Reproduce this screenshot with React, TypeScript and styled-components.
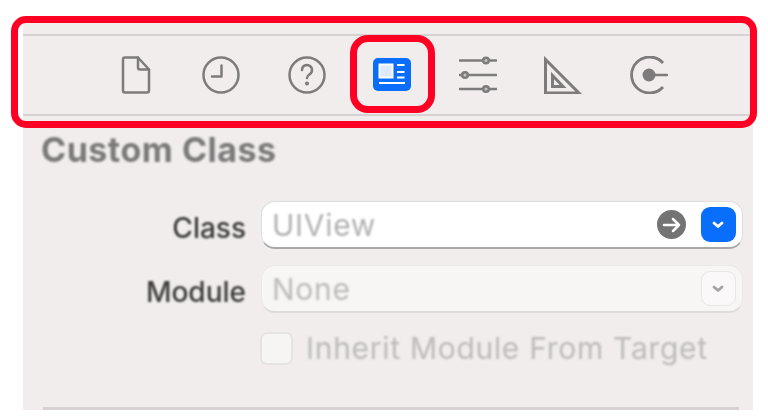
import * as React from "react";
import styled, { createGlobalStyle } from "styled-components";

const GRAY = "#7d7b7b";
const BLUE = "#0a6efd";
const RED = "#ff0024";
const PANEL = "#f1eded";

const GlobalStyle = createGlobalStyle`
  html, body {
    margin: 0;
    background: #fff;
    font-family: Inter, "Liberation Sans", sans-serif;
  }
`;

const Page = styled.div`
  position: relative;
  width: 768px;
  height: 420px;
  padding: 20px 0 0 23px;
  box-sizing: border-box;
  overflow: hidden;
`;

const Inspector = styled.div`
  width: 730px;
  height: 389.5px;
  background: ${PANEL};
  display: flex;
  flex-direction: column;
`;

const Toolbar = styled.div`
  margin-top: 13.5px;
  width: 727px;
  height: 82.5px;
  box-sizing: border-box;
  border-top: 2px solid #d5d2d1;
  border-bottom: 2.5px solid #d5d2d1;
  display: flex;
  align-items: center;
  padding-left: 70px;
  filter: blur(0.6px);
`;

const ToolButton = styled.div`
  width: 85.5px;
  display: flex;
  justify-content: center;
  align-items: center;
  flex: none;
`;

const Heading = styled.div`
  margin: 14.5px 0 0 18px;
  font-size: 34px;
  line-height: 38px;
  font-weight: 700;
  color: #7b7979;
  letter-spacing: 0.5px;
  filter: blur(0.8px);
`;

const Form = styled.div`
  margin-top: 32.5px;
  display: grid;
  grid-template-columns: 223px 482px;
  column-gap: 15px;
  row-gap: 16px;
  align-items: center;
`;

const Label = styled.div`
  text-align: right;
  font-size: 28px;
  line-height: 32px;
  font-weight: 500;
  color: #3a3838;
  position: relative;
  top: 3px;
  filter: blur(0.8px);
`;

const Field = styled.div<{ $disabled?: boolean }>`
  height: 48px;
  box-sizing: border-box;
  border-radius: 14px;
  padding: 0 6.5px 0 10px;
  display: flex;
  align-items: center;
  gap: 15px;
  background: ${p => (p.$disabled ? "#f8f6f5" : "#fff")};
  border: 1.5px solid ${p => (p.$disabled ? "#ebe8e8" : "#e0dddd")};
  border-bottom: 2px solid ${p => (p.$disabled ? "#dedbdb" : "#aaa7a7")};
`;

const FieldText = styled.div<{ $disabled?: boolean }>`
  flex: 1;
  font-size: 30px;
  line-height: 40px;
  letter-spacing: 0.7px;
  color: ${p => (p.$disabled ? "#bdbaba" : "#b3b1b1")};
  filter: blur(0.8px);
`;

const ArrowCircle = styled.div`
  width: 29px;
  height: 29px;
  border-radius: 50%;
  background: #757474;
  display: flex;
  align-items: center;
  justify-content: center;
  filter: blur(0.6px);
`;

const Stepper = styled.div<{ $disabled?: boolean }>`
  width: 35px;
  height: 35px;
  border-radius: 9px;
  display: flex;
  align-items: center;
  justify-content: center;
  background: ${p => (p.$disabled ? "#faf8f8" : BLUE)};
  border: ${p => (p.$disabled ? "1.5px solid #e8e6e6" : "none")};
  box-sizing: border-box;
`;

const CheckRow = styled.div`
  grid-column: 2;
  display: flex;
  align-items: center;
  gap: 13px;
  margin: 1px 0 0 -1px;
`;

const CheckBox = styled.div`
  width: 33px;
  height: 33px;
  box-sizing: border-box;
  border-radius: 7px;
  background: #f7f5f4;
  border: 2px solid #e6e3e3;
`;

const CheckText = styled.div`
  font-size: 30px;
  line-height: 36px;
  letter-spacing: 0.7px;
  color: #bdbaba;
  white-space: nowrap;
  filter: blur(0.8px);
`;

const BottomRule = styled.div`
  margin: auto 14px 0 20px;
  height: 2.5px;
  background: #d5d2d1;
`;

// red annotation frames drawn on top of the screenshot
const Highlight = styled.div<{ $inner?: boolean }>`
  position: absolute;
  box-sizing: border-box;
  border: 7px solid ${RED};
  left: ${p => (p.$inner ? 350 : 11)}px;
  top: ${p => (p.$inner ? 35 : 16)}px;
  width: ${p => (p.$inner ? 85 : 746)}px;
  height: ${p => (p.$inner ? 78 : 111.5)}px;
  border-radius: ${p => (p.$inner ? 18 : 15)}px;
`;

const Icon: React.FC<{ children: React.ReactNode }> = ({ children }) => (
  <svg width="38" height="38" viewBox="0 0 38 38" fill="none" stroke={GRAY} strokeWidth="2.5" strokeLinecap="round" strokeLinejoin="round">
    {children}
  </svg>
);

const Chevron: React.FC<{ color: string }> = ({ color }) => (
  <svg width="14" height="10" viewBox="0 0 14 10" fill="none" stroke={color} strokeWidth="2.8" strokeLinecap="round" strokeLinejoin="round">
    <path d="M3 3l4 3.5L11 3" />
  </svg>
);

export default function App() {
  return (
    <Page>
      <GlobalStyle />
      <Inspector>
        <Toolbar>
          <ToolButton>
            <Icon>
              <path d="M8 1.5h13l11 12v21a2 2 0 0 1-2 2H8a2 2 0 0 1-2-2v-31a2 2 0 0 1 2-2z" />
              <path d="M21 1.5v10a2 2 0 0 0 2 2h9" />
            </Icon>
          </ToolButton>
          <ToolButton>
            <Icon>
              <circle cx="19" cy="19" r="17.5" />
              <path d="M19.5 9.5v11H10" />
            </Icon>
          </ToolButton>
          <ToolButton>
            <Icon>
              <circle cx="19" cy="19" r="17.5" />
              <path d="M14 14a5 5 0 1 1 7.7 4.2c-1.8 1.1-2.7 1.9-2.7 3.8" />
              <circle cx="19" cy="27.5" r="0.8" fill={GRAY} />
            </Icon>
          </ToolButton>
          <ToolButton>
            <svg width="38" height="33" viewBox="0 0 38 33">
              <rect width="38" height="33" rx="5" fill={BLUE} />
              <rect x="6.5" y="6.5" width="13" height="13" fill="#dce9ff" stroke="#fff" strokeWidth="2" />
              <path d="M24 7h7.5M24 14h7.5M24 19.5h7.5M6 25h26" stroke="#fff" strokeWidth="2" />
            </svg>
          </ToolButton>
          <ToolButton>
            <Icon>
              <path d="M0.5 4.5h37M0.5 19h37M0.5 33h37" strokeWidth="2.3" />
              <circle cx="27" cy="4.5" r="2.8" fill="#c4c2c2" />
              <circle cx="6" cy="19" r="2.8" fill="#c4c2c2" />
              <circle cx="27" cy="33" r="2.8" fill="#c4c2c2" />
            </Icon>
          </ToolButton>
          <ToolButton>
            <Icon>
              <path d="M1.5 3.5V37H35z" strokeWidth="3" strokeLinejoin="miter" />
              <path d="M8.5 19.5V30.5H19z" strokeWidth="3" strokeLinejoin="miter" />
            </Icon>
          </ToolButton>
          <ToolButton>
            <Icon>
              <path d="M33 7A18 18 0 1 0 33 31" strokeWidth="2.8" strokeLinecap="butt" />
              <path d="M19 19h18" />
              <circle cx="19" cy="19" r="6.5" fill={GRAY} stroke="none" />
            </Icon>
          </ToolButton>
        </Toolbar>
        <Heading>Custom Class</Heading>
        <Form>
          <Label>Class</Label>
          <Field>
            <FieldText>UIView</FieldText>
            <ArrowCircle>
              <svg width="19" height="16" viewBox="0 0 19 16" fill="none" stroke="#fff" strokeWidth="2.5" strokeLinecap="round" strokeLinejoin="round">
                <path d="M2 8h15M11 2l6 6-6 6" />
              </svg>
            </ArrowCircle>
            <Stepper>
              <Chevron color="#fff" />
            </Stepper>
          </Field>
          <Label>Module</Label>
          <Field $disabled>
            <FieldText $disabled>None</FieldText>
            <Stepper $disabled>
              <Chevron color="#a5a3a3" />
            </Stepper>
          </Field>
          <CheckRow>
            <CheckBox />
            <CheckText>Inherit Module From Target</CheckText>
          </CheckRow>
        </Form>
        <BottomRule />
      </Inspector>
      <Highlight />
      <Highlight $inner />
    </Page>
  );
}
